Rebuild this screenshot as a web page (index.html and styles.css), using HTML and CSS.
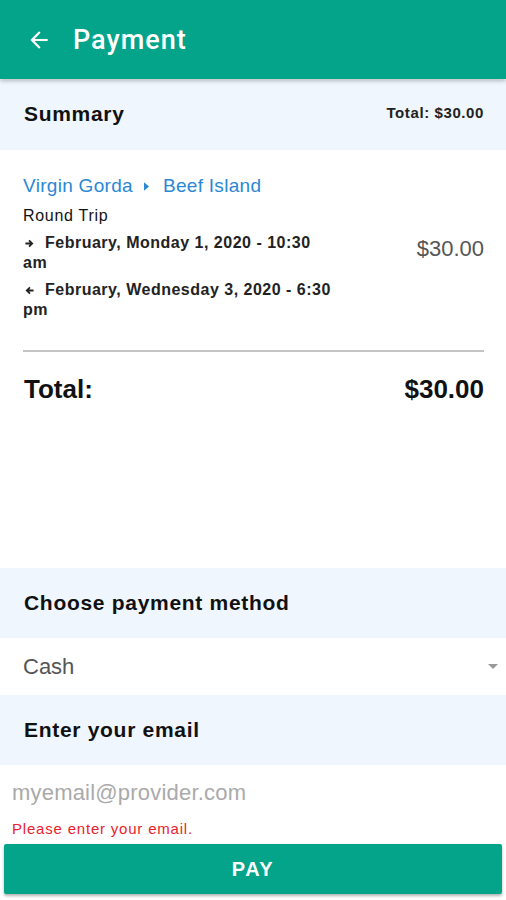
FILE: index.html
```html
<!DOCTYPE html>
<html>
<head>
<meta charset="utf-8">
<link rel="stylesheet" href="styles.css">
</head>
<body>
<div class="app">
  <header class="topbar">
    <svg class="back" viewBox="0 0 24 24" width="26" height="26"><path d="M20 11H7.83l5.59-5.59L12 4l-8 8 8 8 1.41-1.41L7.83 13H20v-2z" fill="#fff"/></svg>
    <h1 class="title">Payment</h1>
  </header>
  <section class="band summary-band">
    <span class="band-title">Summary</span>
    <span class="band-total">Total: $30.00</span>
  </section>
  <section class="trip">
    <div class="route">
      <span>Virgin Gorda</span>
      <svg class="caret" viewBox="0 0 6 10" width="6" height="10"><path d="M0 0l6 5-6 5z" fill="#2a88d4"/></svg>
      <span>Beef Island</span>
    </div>
    <div class="trip-row">
      <div class="trip-info">
        <div class="trip-type">Round Trip</div>
        <div class="leg"><svg class="arr" viewBox="0 0 10 10" width="10" height="10"><path d="M0.5 5h7M4.5 1.5L8 5l-3.5 3.5" stroke="#222" stroke-width="2" fill="none"/></svg>February, Monday 1, 2020 - 10:30 am</div>
        <div class="leg"><svg class="arr" viewBox="0 0 10 10" width="10" height="10"><path d="M9.5 5h-7M5.5 1.5L2 5l3.5 3.5" stroke="#222" stroke-width="2" fill="none"/></svg>February, Wednesday 3, 2020 - 6:30 pm</div>
      </div>
      <div class="trip-price">$30.00</div>
    </div>
    <hr class="divider">
    <div class="grand">
      <span>Total:</span>
      <span>$30.00</span>
    </div>
  </section>
  <section class="band">
    <span class="band-title">Choose payment method</span>
  </section>
  <div class="select-row">
    <span class="select-value">Cash</span>
    <span class="select-caret"></span>
  </div>
  <section class="band">
    <span class="band-title">Enter your email</span>
  </section>
  <div class="email">
    <div class="placeholder">myemail@provider.com</div>
    <div class="error">Please enter your email.</div>
  </div>
  <button class="pay">PAY</button>
</div>
</body>
</html>
```
FILE: styles.css
```css
* { box-sizing: border-box; }
html, body { margin: 0; padding: 0; background: #fff; }
body { font-family: "Liberation Sans", Arial, sans-serif; color: #111; width: 506px; height: 900px; overflow: hidden; }
.app { display: flex; flex-direction: column; height: 900px; }
.topbar {
  height: 79px; background: #04a48a; display: flex; align-items: center;
  padding-left: 26px; gap: 21px; box-shadow: 0 2px 4px rgba(0,0,0,0.25); position: relative; z-index: 1;
}
.back { display: block; }
.title { margin: 0; font-family: Roboto, sans-serif; font-weight: 500; font-size: 27px; color: #fff; letter-spacing: 1px; }
.band {
  background: #eff6fd; height: 70px; display: flex; align-items: center; justify-content: space-between;
  padding: 0 22px 0 24px;
}
.summary-band { margin-top: 1px; }
.band-title { font-family: "Liberation Sans", Arial, sans-serif; font-weight: bold; font-size: 21px; color: #111; letter-spacing: 0.7px; }
.summary-band .band-title { margin-top: -2px; }
.band-total { font-weight: bold; font-size: 15px; color: #222; margin-top: -6px; letter-spacing: 0.6px; }
.trip { padding: 25px 22px 0 23px; height: 418px; }
.route { display: flex; align-items: center; color: #2a88d4; font-size: 19px; letter-spacing: 0.3px; line-height: 22px; }
.route .caret { margin: 0 14px 0 11px; width: 5px; height: 9px; }
.trip-row { display: flex; justify-content: space-between; margin-top: 9px; }
.trip-info { width: 308px; }
.trip-type { font-size: 16px; color: #111; line-height: 20px; letter-spacing: 0.7px; }
.leg { font-size: 16px; font-weight: bold; color: #222; line-height: 20px; margin-top: 7px; letter-spacing: 0.5px; }
.arr { display: inline-block; width: 9px; height: 9px; margin: 0 11px 0 2px; vertical-align: 0; }
.trip-price { font-size: 22px; color: #555; margin-top: 30px; line-height: 26px; }
.divider { border: 0; border-top: 2px solid #c4c4c4; margin: 30px 0 0; }
.grand { display: flex; justify-content: space-between; font-weight: bold; font-size: 26px; line-height: 30px; color: #111; margin-top: 22px; padding-left: 1px; }
.select-row { height: 57px; display: flex; align-items: center; justify-content: space-between; padding: 0 8px 0 23px; }
.select-value { font-size: 22px; color: #555; }
.select-caret { width: 0; height: 0; border-left: 5px solid transparent; border-right: 5px solid transparent; border-top: 5px solid #999; }
.email { padding: 15px 0 0 12px; height: 79px; }
.placeholder { font-size: 22px; color: #aaa; letter-spacing: 0.2px; line-height: 26px; }
.error { font-size: 15px; color: #e8232e; margin-top: 14px; letter-spacing: 0.8px; }
.pay {
  margin: 0 4px; height: 50px; border: 0; background: #04a48a; color: #fff; font-family: "Liberation Sans", Arial, sans-serif;
  font-weight: bold; font-size: 20px; letter-spacing: 1.5px; box-shadow: 0 2px 3px rgba(0,0,0,0.3); border-radius: 2px;
}
```
